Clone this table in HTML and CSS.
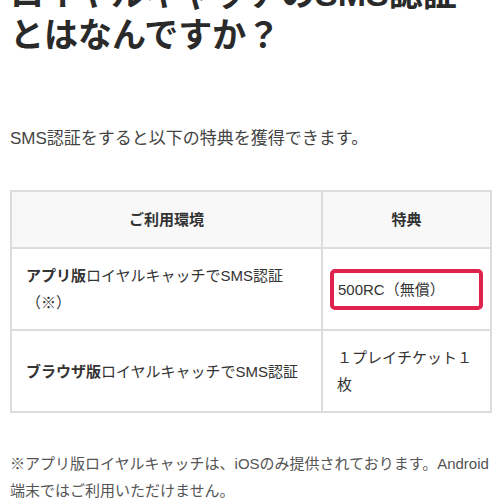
FILE: index.html
```html
<!DOCTYPE html>
<html lang="ja">
<head>
<meta charset="utf-8">
<link rel="stylesheet" href="styles.css">
</head>
<body>
<div class="page">
  <h1 class="title">ロイヤルキャッチのSMS認証<br>とはなんですか？</h1>
  <p class="lead">SMS認証をすると以下の特典を獲得できます。</p>
  <table class="perks">
    <colgroup><col class="c1"><col class="c2"></colgroup>
    <thead>
      <tr><th>ご利用環境</th><th>特典</th></tr>
    </thead>
    <tbody>
      <tr>
        <td><b>アプリ版</b>ロイヤルキャッチでSMS認証（※）</td>
        <td class="gift"><div class="hl">500RC（無償）</div></td>
      </tr>
      <tr>
        <td><b>ブラウザ版</b>ロイヤルキャッチでSMS認証</td>
        <td class="gift">１プレイチケット１枚</td>
      </tr>
    </tbody>
  </table>
  <p class="note">※アプリ版ロイヤルキャッチは、iOSのみ提供されております。Android端末ではご利用いただけません。</p>
</div>
</body>
</html>
```
FILE: styles.css
```css
html, body {
  margin: 0;
  padding: 0;
  background: #fff;
}
body {
  font-family: "Liberation Sans", "Noto Sans CJK JP", sans-serif;
  color: #333;
}
.page {
  padding: 0 10px;
}
.title {
  margin: -26px 0 0;
  font-size: 34px;
  line-height: 41px;
  font-weight: 700;
  color: #2a2a2a;
}
.lead {
  margin: 68px 0 0;
  font-size: 17px;
  line-height: 30px;
  color: #444;
}
.perks {
  margin-top: 36px;
  width: 480px;
  border-collapse: collapse;
  table-layout: fixed;
  font-size: 15px;
  line-height: 27px;
}
.c1 { width: 311px; }
.c2 { width: 169px; }
.perks th, .perks td {
  border: 2px solid #dcdcdc;
  padding: 13px 14px;
  vertical-align: middle;
  text-align: left;
}
.perks th {
  background: #f8f8f8;
  text-align: center;
  font-weight: 700;
  padding: 14px;
}
.perks td b {
  font-weight: 700;
}
.hl {
  margin: 0 -7px;
  border: 4px solid #e0234e;
  border-radius: 5px;
  padding: 3px 4px;
}
.note {
  margin: 37px 0 0;
  font-size: 15px;
  line-height: 27px;
  color: #555;
}
```
